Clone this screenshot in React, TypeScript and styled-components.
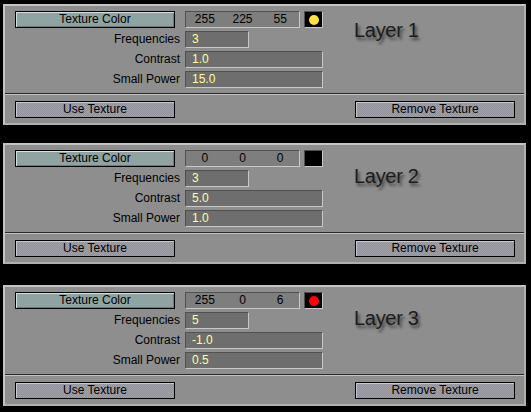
import React from 'react'
import styled, { createGlobalStyle } from 'styled-components'

const GlobalStyle = createGlobalStyle`
  html, body {
    margin: 0;
    padding: 0;
    background: #000;
  }
  body {
    font-family: "Liberation Sans", Arial, sans-serif;
  }
`

const Page = styled.div`
  width: 531px;
  height: 412px;
  padding: 4px 0 0 3px;
  box-sizing: border-box;
  background: #000;
  display: flex;
  flex-direction: column;
`

const Panel = styled.div<{ $gap: number }>`
  width: 523px;
  margin-top: ${(p) => p.$gap}px;
  box-sizing: border-box;
  background: #8e8e8e;
  border: 2px solid #c4c4c4;
  border-right-color: #b0b0b0;
  border-bottom-color: #b0b0b0;
  display: flex;
  flex-direction: column;
`

const TopSection = styled.div`
  display: flex;
  padding: 5px 10px 5px 10px;
`

const FieldGrid = styled.div`
  display: grid;
  grid-template-columns: 160px 138px;
  grid-auto-rows: 17px;
  column-gap: 10px;
  row-gap: 3px;
`

const Label = styled.div`
  font-size: 12px;
  color: #000;
  text-align: right;
  line-height: 17px;
  margin-right: -5px;
`

const ColorButton = styled.div`
  box-sizing: border-box;
  height: 17px;
  background: #90a3a3;
  border: 1px solid #000;
  box-shadow: inset 1px 1px 0 #d4e0e0, inset -1px -1px 0 #6c7c7c;
  font-size: 12px;
  line-height: 15px;
  text-align: center;
  color: #000;
`

const ColorRow = styled.div`
  display: flex;
  gap: 4px;
`

const ValueBox = styled.div`
  box-sizing: border-box;
  width: 115px;
  height: 17px;
  background: #7e7e7e;
  border: 1px solid #c8c8c8;
  border-top-color: #505050;
  border-left-color: #505050;
  display: grid;
  grid-template-columns: 1fr 1fr 1fr;
  font-size: 12px;
  line-height: 15px;
  color: #000;
`

const ValueCell = styled.span`
  text-align: center;
`

const Swatch = styled.div`
  box-sizing: border-box;
  width: 19px;
  height: 17px;
  background: #000;
  border: 1px solid #c8c8c8;
  border-top-color: #505050;
  border-left-color: #505050;
  display: flex;
  align-items: center;
  justify-content: center;
`

const Dot = styled.div<{ $color: string }>`
  width: 10px;
  height: 10px;
  border-radius: 50%;
  background: ${(p) => p.$color};
`

const Input = styled.div<{ $width: number }>`
  box-sizing: border-box;
  width: ${(p) => p.$width}px;
  height: 17px;
  background: #6e6e6e;
  border: 1px solid #c8c8c8;
  border-top-color: #505050;
  border-left-color: #505050;
  padding-left: 6px;
  font-size: 12px;
  line-height: 15px;
  color: #ffff9c;
`

const Title = styled.div<{ $top: number }>`
  margin-left: 31px;
  padding-top: ${(p) => p.$top}px;
  font-size: 20px;
  letter-spacing: -0.3px;
  color: #1c1c1c;
  text-shadow: 2px 3px 3px rgba(0, 0, 0, 0.55);
`

const Separator = styled.div`
  height: 1px;
  background: #2a2a2a;
  border-bottom: 1px solid #c4c4c4;
`

const BottomSection = styled.div`
  display: flex;
  justify-content: space-between;
  padding: 6px 9px 5px 10px;
`

const ActionButton = styled.div`
  box-sizing: border-box;
  width: 160px;
  height: 17px;
  border: 1px solid #000;
  background: repeating-conic-gradient(#a2a2aa 0 25%, #90909a 0 50%) 0 0 / 2px 2px;
  box-shadow: inset 1px 1px 0 #c8c8d0;
  font-size: 12px;
  line-height: 15px;
  text-align: center;
  color: #000;
`

type Layer = {
  name: string
  rgb: [number, number, number]
  dot: string
  frequencies: string
  contrast: string
  smallPower: string
  gap: number
  titleTop: number
}

const layers: Layer[] = [
  { name: 'Layer 1', rgb: [255, 225, 55], dot: '#ffe137', frequencies: '3', contrast: '1.0', smallPower: '15.0', gap: 0, titleTop: 8 },
  { name: 'Layer 2', rgb: [0, 0, 0], dot: '#000', frequencies: '3', contrast: '5.0', smallPower: '1.0', gap: 18, titleTop: 15 },
  { name: 'Layer 3', rgb: [255, 0, 6], dot: '#ff0006', frequencies: '5', contrast: '-1.0', smallPower: '0.5', gap: 21, titleTop: 15 },
]

const LayerPanel = ({ layer }: { layer: Layer }) => (
  <Panel $gap={layer.gap}>
    <TopSection>
      <FieldGrid>
        <ColorButton>Texture Color</ColorButton>
        <ColorRow>
          <ValueBox>
            {layer.rgb.map((v, i) => (
              <ValueCell key={i}>{v}</ValueCell>
            ))}
          </ValueBox>
          <Swatch>
            <Dot $color={layer.dot} />
          </Swatch>
        </ColorRow>
        <Label>Frequencies</Label>
        <Input $width={64}>{layer.frequencies}</Input>
        <Label>Contrast</Label>
        <Input $width={138}>{layer.contrast}</Input>
        <Label>Small Power</Label>
        <Input $width={138}>{layer.smallPower}</Input>
      </FieldGrid>
      <Title $top={layer.titleTop}>{layer.name}</Title>
    </TopSection>
    <Separator />
    <BottomSection>
      <ActionButton>Use Texture</ActionButton>
      <ActionButton>Remove Texture</ActionButton>
    </BottomSection>
  </Panel>
)

const App = () => {
  return (
    <>
      <GlobalStyle />
      <Page>
        {layers.map((l) => (
          <LayerPanel key={l.name} layer={l} />
        ))}
      </Page>
    </>
  )
}

export default App
